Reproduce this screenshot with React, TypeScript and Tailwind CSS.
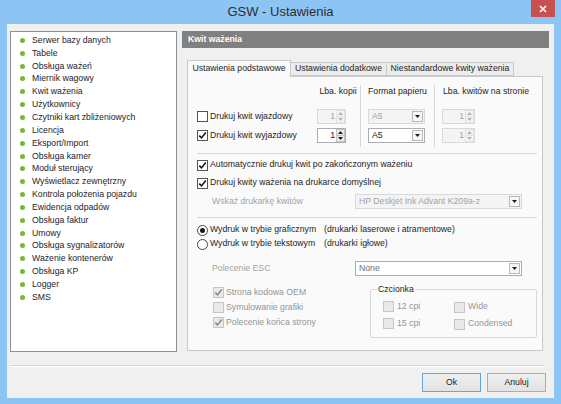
import React from 'react'

const menu = [
  'Serwer bazy danych',
  'Tabele',
  'Obsługa ważeń',
  'Miernik wagowy',
  'Kwit ważenia',
  'Użytkownicy',
  'Czytniki kart zbliżeniowych',
  'Licencja',
  'Eksport/Import',
  'Obsługa kamer',
  'Moduł sterujący',
  'Wyświetlacz zewnętrzny',
  'Kontrola położenia pojazdu',
  'Ewidencja odpadów',
  'Obsługa faktur',
  'Umowy',
  'Obsługa sygnalizatorów',
  'Ważenie kontenerów',
  'Obsługa KP',
  'Logger',
  'SMS',
]

function Check({ checked, disabled }: { checked?: boolean; disabled?: boolean }) {
  return (
    <span
      className={`w-[11px] h-[11px] shrink-0 border flex items-center justify-center ${
        disabled ? 'border-[#c6c6c6] bg-[#e9e9e9]' : 'border-[#555555] bg-white'
      }`}
    >
      {checked && (
        <svg width="9" height="9" viewBox="0 0 9 9">
          <path d="M1.3 4.6 L3.5 6.9 L7.8 1.5" fill="none" stroke={disabled ? '#8a8a8a' : '#151515'} strokeWidth="1.6" />
        </svg>
      )}
    </span>
  )
}

function Radio({ checked }: { checked?: boolean }) {
  return (
    <span className="w-[11px] h-[11px] shrink-0 rounded-full border border-[#444444] bg-white flex items-center justify-center">
      {checked && <span className="w-[5px] h-[5px] rounded-full bg-[#1a1a1a]" />}
    </span>
  )
}

function Arrow({ up, color = '#1a1a1a' }: { up?: boolean; color?: string }) {
  return (
    <svg width="5" height="3" viewBox="0 0 5 3">
      <path d={up ? 'M0 3 L2.5 0 L5 3 Z' : 'M0 0 L5 0 L2.5 3 Z'} fill={color} />
    </svg>
  )
}

function Spin({ className, disabled }: { className: string; disabled?: boolean }) {
  return (
    <div
      className={`h-[15px] border flex ${className} ${
        disabled ? 'border-[#d9d9d9] bg-[#f4f4f4] text-[#a3a3a3]' : 'border-[#abadb3] bg-white text-[#1a1a1a]'
      }`}
    >
      <span className="flex-1 text-right pr-[1px] leading-[13px]">1</span>
      <span className="w-[9px] flex flex-col">
        <span
          className={`flex-1 flex items-center justify-center border ${
            disabled ? 'border-[#e2e2e2] bg-[#f4f4f4]' : 'border-[#c3c3c3] bg-[#ececec]'
          }`}
        >
          <Arrow up color={disabled ? '#b5b5b5' : '#1a1a1a'} />
        </span>
        <span
          className={`flex-1 flex items-center justify-center border border-t-0 ${
            disabled ? 'border-[#e2e2e2] bg-[#f4f4f4]' : 'border-[#c3c3c3] bg-[#ececec]'
          }`}
        >
          <Arrow color={disabled ? '#b5b5b5' : '#1a1a1a'} />
        </span>
      </span>
    </div>
  )
}

function Combo({ value, className, disabled, dim }: { value: string; className: string; disabled?: boolean; dim?: boolean }) {
  return (
    <div
      className={`h-[15px] border flex items-center ${className} ${
        disabled ? 'border-[#d9d9d9] bg-[#f4f4f4] text-[#a3a3a3]' : 'border-[#abadb3] bg-white'
      } ${dim ? 'text-[#6d6d6d]' : ''} ${!disabled && !dim ? 'text-[#1a1a1a]' : ''}`}
    >
      <span className="flex-1 pl-[3px] leading-[13px]">{value}</span>
      <span className="w-[11px] h-[11px] mr-[1px] border border-[#b8b8b8] bg-[#f6f6f6] flex items-center justify-center">
        <Arrow />
      </span>
    </div>
  )
}

function Btn({ label, focused }: { label: string; focused?: boolean }) {
  return (
    <div
      className={`w-[59px] h-[19px] border flex items-center justify-center text-[#1a1a1a] bg-gradient-to-b from-[#efefef] to-[#e3e3e3] ${
        focused ? 'border-[#62a6e0]' : 'border-[#adadad]'
      }`}
    >
      {label}
    </div>
  )
}

export default function App() {
  return (
    <div className="w-[561px] h-[404px] bg-[#8cc4f4] flex flex-col overflow-hidden font-['Liberation_Sans',Arial,sans-serif] text-[8.7px] text-[#1e1e1e]">
      {/* title bar */}
      <div className="h-[24px] shrink-0 relative flex items-center justify-center">
        <span className="text-[13px] text-[#2e2e2e]">GSW - Ustawienia</span>
        <div className="absolute right-[6px] top-0 w-[24px] h-[17px] bg-[#c75050] flex items-center justify-center">
          <svg width="8" height="8" viewBox="0 0 8 8">
            <path d="M1 1 L7 7 M7 1 L1 7" stroke="#ffffff" strokeWidth="1.6" />
          </svg>
        </div>
      </div>

      {/* client */}
      <div className="mx-[7px] mb-[6px] flex-1 bg-[#f0f0f0] flex flex-col">
        <div className="flex pt-[7px] pl-[3px]">
          {/* menu list */}
          <div className="w-[167px] h-[321px] bg-white border border-[#8e9098] pt-[2px]">
            {menu.map(item => (
              <div key={item} className="h-[12.85px] flex items-center pl-[9px] text-[#1c1c2c]">
                <span className="w-[5px] h-[5px] rounded-full bg-[#74b83a] shrink-0" />
                <span className="ml-[7px] whitespace-nowrap">{item}</span>
              </div>
            ))}
          </div>

          {/* right side */}
          <div className="ml-[5px] w-[367px]">
            <div className="h-[17px] bg-[#808080] text-white font-bold flex items-center pl-[6px]">Kwit ważenia</div>

            {/* tabs */}
            <div className="mt-[11px] ml-[5px] h-[17px] flex items-end relative z-10">
              <div className="w-[104px] h-[17px] border border-b-0 border-[#c9c9c9] bg-[#fafafa] flex items-center justify-center -mb-px">
                Ustawienia podstawowe
              </div>
              <div className="w-[96px] h-[14px] border border-[#c9c9c9] border-l-0 bg-[#ececec] flex items-center justify-center">
                Ustawienia dodatkowe
              </div>
              <div className="w-[127px] h-[14px] border border-[#c9c9c9] border-l-0 bg-[#ececec] flex items-center justify-center">
                Niestandardowe kwity ważenia
              </div>
            </div>

            {/* tab page */}
            <div className="ml-[5px] w-[356px] h-[275px] border border-[#c9c9c9] bg-[#fafafa] pl-[9px]">
              {/* copies / paper grid */}
              <div className="pt-[8px] flex">
                <div className="w-[119px] flex flex-col">
                  <div className="h-[13px]" />
                  <div className="mt-[11px] h-[15px] flex items-center">
                    <Check />
                    <span className="ml-[2px]">Drukuj kwit wjazdowy</span>
                  </div>
                  <div className="mt-[4px] h-[15px] flex items-center">
                    <Check checked />
                    <span className="ml-[2px]">Drukuj kwit wyjazdowy</span>
                  </div>
                </div>
                <div className="w-[44px] flex flex-col pb-[4px]">
                  <div className="h-[13px] flex items-center justify-center">Lba. kopii</div>
                  <div className="mt-[11px] ml-[1px]">
                    <Spin className="w-[29px]" disabled />
                  </div>
                  <div className="mt-[4px] ml-[1px]">
                    <Spin className="w-[29px]" />
                  </div>
                </div>
                <div className="w-[74px] border-l border-[#d7d7d7] flex flex-col pb-[4px]">
                  <div className="h-[13px] flex items-center justify-center">Format papieru</div>
                  <div className="mt-[11px] ml-[7px]">
                    <Combo value="A5" className="w-[57px]" disabled />
                  </div>
                  <div className="mt-[4px] ml-[7px]">
                    <Combo value="A5" className="w-[57px]" />
                  </div>
                </div>
                <div className="w-[103px] border-l border-[#d7d7d7] flex flex-col pb-[4px]">
                  <div className="h-[13px] flex items-center justify-center">Lba. kwitów na stronie</div>
                  <div className="mt-[11px] ml-[7px]">
                    <Spin className="w-[33px]" disabled />
                  </div>
                  <div className="mt-[4px] ml-[7px]">
                    <Spin className="w-[33px]" disabled />
                  </div>
                </div>
              </div>

              <div className="mt-[6px] w-[340px] h-px bg-[#d7d7d7]" />

              <div className="mt-[4px] h-[14px] flex items-center">
                <Check checked />
                <span className="ml-[2px]">Automatycznie drukuj kwit po zakończonym ważeniu</span>
              </div>
              <div className="mt-[4px] h-[14px] flex items-center">
                <Check checked />
                <span className="ml-[2px]">Drukuj kwity ważenia na drukarce domyślnej</span>
              </div>
              <div className="mt-[4px] h-[15px] flex items-center">
                <span className="w-[158px] pl-[15px] text-[#a3a3a3]">Wskaż drukarkę kwitów</span>
                <Combo value="HP Deskjet Ink Advant K209a-z" className="w-[167px]" disabled />
              </div>

              <div className="mt-[8px] w-[340px] h-px bg-[#d7d7d7]" />

              <div className="mt-[5px] h-[14px] flex items-center">
                <Radio checked />
                <span className="ml-[2px] w-[114px] shrink-0">Wydruk w trybie graficznym</span>
                <span>(drukarki laserowe i atramentowe)</span>
              </div>
              <div className="h-[14px] flex items-center">
                <Radio />
                <span className="ml-[2px] w-[114px] shrink-0">Wydruk w trybie tekstowym</span>
                <span>(drukarki igłowe)</span>
              </div>

              <div className="mt-[10px] h-[15px] flex items-center">
                <span className="w-[158px] pl-[15px] text-[#a3a3a3]">Polecenie ESC</span>
                <Combo value="None" className="w-[167px]" dim />
              </div>

              <div className="mt-[9px] flex">
                <div className="w-[157px] pl-[16px] text-[#959595]">
                  <div className="h-[15px] flex items-center">
                    <Check checked disabled />
                    <span className="ml-[2px]">Strona kodowa OEM</span>
                  </div>
                  <div className="h-[15px] flex items-center">
                    <Check disabled />
                    <span className="ml-[2px]">Symulowanie grafiki</span>
                  </div>
                  <div className="h-[15px] flex items-center">
                    <Check checked disabled />
                    <span className="ml-[2px]">Polecenie końca strony</span>
                  </div>
                </div>
                <div className="mt-[4px] ml-[16px] w-[167px] h-[49px] border border-[#d7d7d7] rounded-[2px] relative pl-[12px] pt-[10px] text-[#959595]">
                  <span className="absolute -top-[7px] left-[6px] px-[1px] bg-[#fafafa] text-[#1e1e1e] leading-[12px]">Czcionka</span>
                  <div className="h-[14px] flex items-center">
                    <span className="w-[71px] flex items-center">
                      <Check disabled />
                      <span className="ml-[3px]">12 cpi</span>
                    </span>
                    <Check disabled />
                    <span className="ml-[3px]">Wide</span>
                  </div>
                  <div className="mt-[3px] h-[14px] flex items-center">
                    <span className="w-[71px] flex items-center">
                      <Check disabled />
                      <span className="ml-[3px]">15 cpi</span>
                    </span>
                    <Check disabled />
                    <span className="ml-[3px]">Condensed</span>
                  </div>
                </div>
              </div>
            </div>
          </div>
        </div>

        <div className="mt-[13px] ml-[3px] mr-[9px] h-px bg-[#d3d3d3]" />
        <div className="h-px ml-[3px] mr-[9px] bg-white" />

        <div className="mt-[6px] flex justify-end gap-[6px] pr-[8px]">
          <Btn label="Ok" focused />
          <Btn label="Anuluj" />
        </div>
      </div>
    </div>
  )
}
